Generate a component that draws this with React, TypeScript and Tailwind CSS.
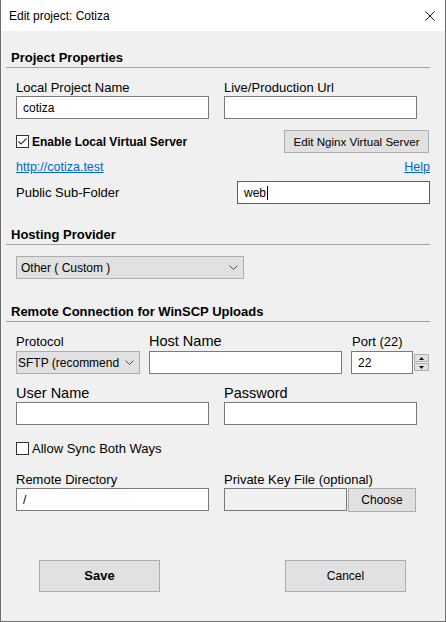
import type { ReactNode } from 'react';

const FONT = { fontFamily: '"Liberation Sans", Arial, sans-serif' };

function SectionHeading({ title, top }: { title: string; top: string }) {
  return (
    <div className={`flex flex-col ${top}`}>
      <div className="pl-[10px] h-[16px] leading-[16px] text-[13px] font-bold text-black">{title}</div>
      <div className="ml-[5px] mt-[1px] w-[424px] h-px bg-[#a0a0a0]" />
    </div>
  );
}

function TextBox({ value, width, focused, disabled }: { value?: string; width: string; focused?: boolean; disabled?: boolean }) {
  return (
    <div
      className={`${width} h-[23px] border flex items-center pl-[6px] text-[12px] text-black ${
        focused ? 'border-[#0078d7]' : 'border-[#7a7a7a]'
      } ${disabled ? 'bg-[#f0f0f0]' : 'bg-white'}`}
    >
      {value}
      {focused && <span className="ml-px w-px h-[14px] bg-black" />}
    </div>
  );
}

function Chevron() {
  return (
    <svg width="9" height="5" viewBox="0 0 9 5" className="shrink-0">
      <polyline points="0.5,0.5 4.5,4.5 8.5,0.5" fill="none" stroke="#505050" strokeWidth="1" />
    </svg>
  );
}

function Dropdown({ value, width, pad = 'pl-[4px]' }: { value: string; width: string; pad?: string }) {
  return (
    <div className={`${width} h-[23px] border border-[#adadad] bg-[#e1e1e1] flex items-center ${pad} pr-[5px] text-[12px] text-black`}>
      <span className="flex-1 whitespace-nowrap">{value}</span>
      <Chevron />
    </div>
  );
}

function Button({ children, className }: { children: ReactNode; className: string }) {
  return (
    <div className={`border border-[#adadad] bg-[#e1e1e1] flex items-center justify-center text-black ${className}`}>
      {children}
    </div>
  );
}

function CheckBox({ checked }: { checked?: boolean }) {
  return (
    <div className="w-[13px] h-[13px] border border-[#333333] bg-white shrink-0 flex items-center justify-center">
      {checked && (
        <svg width="11" height="11" viewBox="0 0 11 11">
          <polyline points="1.5,5.5 4,8 9.5,2.5" fill="none" stroke="#333333" strokeWidth="1.1" />
        </svg>
      )}
    </div>
  );
}

function Label({ children, className = '' }: { children: ReactNode; className?: string }) {
  return <div className={`h-[15px] leading-[15px] text-[13px] text-black whitespace-nowrap ${className}`}>{children}</div>;
}

function BigLabel({ children, className = '' }: { children: ReactNode; className?: string }) {
  return <div className={`h-[17px] leading-[17px] text-[14.5px] text-black whitespace-nowrap ${className}`}>{children}</div>;
}

export default function App() {
  return (
    <div style={FONT} className="w-[446px] h-[622px] flex flex-col border-x border-b border-[#6f6f6f] bg-[#f0f0f0]">
      {/* Title bar */}
      <div className="h-[31px] bg-white flex items-center pl-[8px] pr-[10px] shrink-0">
        <span className="text-[12px] text-black">Edit project: Cotiza</span>
        <svg width="10" height="10" viewBox="0 0 10 10" className="ml-auto">
          <path d="M0.5 0.5 L9.5 9.5 M9.5 0.5 L0.5 9.5" stroke="#111" strokeWidth="1" />
        </svg>
      </div>

      <div className="flex-1 flex flex-col">
        <SectionHeading title="Project Properties" top="mt-[19px]" />

        <div className="mt-[12px] pl-[15px] flex gap-[15px]">
          <div className="flex flex-col">
            <Label>Local Project Name</Label>
            <div className="mt-[1px]"><TextBox value="cotiza" width="w-[193px]" /></div>
          </div>
          <div className="flex flex-col">
            <Label>Live/Production Url</Label>
            <div className="mt-[1px]"><TextBox width="w-[193px]" /></div>
          </div>
        </div>

        <div className="mt-[11px] pl-[15px] flex items-center h-[23px]">
          <CheckBox checked />
          <span className="ml-[3px] text-[12px] font-bold text-black">Enable Local Virtual Server</span>
          <Button className="ml-auto mr-[16px] w-[145px] h-[23px] text-[11.6px]">Edit Nginx Virtual Server</Button>
        </div>

        <div className="mt-[7px] pl-[15px] pr-[15px] flex h-[15px] leading-[15px] text-[12.5px] text-[#0066cc]">
          <span className="underline">http://cotiza.test</span>
          <span className="ml-auto underline">Help</span>
        </div>

        <div className="mt-[6px] pl-[15px] flex items-center">
          <Label className="w-[221px]">Public Sub-Folder</Label>
          <TextBox value="web" width="w-[193px]" focused />
        </div>

        <SectionHeading title="Hosting Provider" top="mt-[23px]" />

        <div className="mt-[11px] pl-[15px]">
          <Dropdown value="Other ( Custom )" width="w-[228px]" />
        </div>

        <SectionHeading title="Remote Connection for WinSCP Uploads" top="mt-[25px]" />

        <div className="mt-[11px] pl-[15px] flex">
          <div className="flex flex-col w-[133px]">
            <div className="h-[17px] leading-[17px] text-[13px] text-black">Protocol</div>
            <div className="mt-[1px]"><Dropdown value="SFTP (recommend" width="w-[124px]" pad="pl-px" /></div>
          </div>
          <div className="flex flex-col w-[202px]">
            <BigLabel>Host Name</BigLabel>
            <div className="mt-[1px]"><TextBox width="w-[193px]" /></div>
          </div>
          <div className="flex flex-col">
            <div className="h-[17px] leading-[17px] text-[13px] text-black pl-px">Port (22)</div>
            <div className="mt-[1px] flex gap-[1px]">
              <TextBox value="22" width="w-[62px]" />
              <div className="flex flex-col gap-[1px] pt-[3px]">
                <div className="w-[15px] h-[8px] border border-[#adadad] bg-[#e1e1e1] flex items-center justify-center">
                  <svg width="5" height="3" viewBox="0 0 5 3"><polygon points="2.5,0 5,3 0,3" fill="#111" /></svg>
                </div>
                <div className="w-[15px] h-[8px] border border-[#adadad] bg-[#e1e1e1] flex items-center justify-center">
                  <svg width="5" height="3" viewBox="0 0 5 3"><polygon points="0,0 5,0 2.5,3" fill="#111" /></svg>
                </div>
              </div>
            </div>
          </div>
        </div>

        <div className="mt-[11px] pl-[15px] flex gap-[15px]">
          <div className="flex flex-col">
            <BigLabel>User Name</BigLabel>
            <TextBox width="w-[193px]" />
          </div>
          <div className="flex flex-col">
            <BigLabel>Password</BigLabel>
            <TextBox width="w-[193px]" />
          </div>
        </div>

        <div className="mt-[17px] pl-[15px] flex items-center h-[13px]">
          <CheckBox />
          <span className="ml-[3px] text-[13px] text-black">Allow Sync Both Ways</span>
        </div>

        <div className="mt-[17px] pl-[15px] flex gap-[15px]">
          <div className="flex flex-col">
            <Label>Remote Directory</Label>
            <div className="mt-[1px]"><TextBox value="/" width="w-[193px]" /></div>
          </div>
          <div className="flex flex-col">
            <Label>Private Key File (optional)</Label>
            <div className="mt-[1px] flex gap-[1px]">
              <TextBox width="w-[123px]" disabled />
              <Button className="w-[68px] h-[24px] text-[12px]">Choose</Button>
            </div>
          </div>
        </div>

        <div className="mt-[48px] pl-[38px] flex gap-[125px]">
          <Button className="w-[121px] h-[32px] text-[13px] font-bold">Save</Button>
          <Button className="w-[121px] h-[32px] text-[12px]">Cancel</Button>
        </div>
      </div>
    </div>
  );
}
